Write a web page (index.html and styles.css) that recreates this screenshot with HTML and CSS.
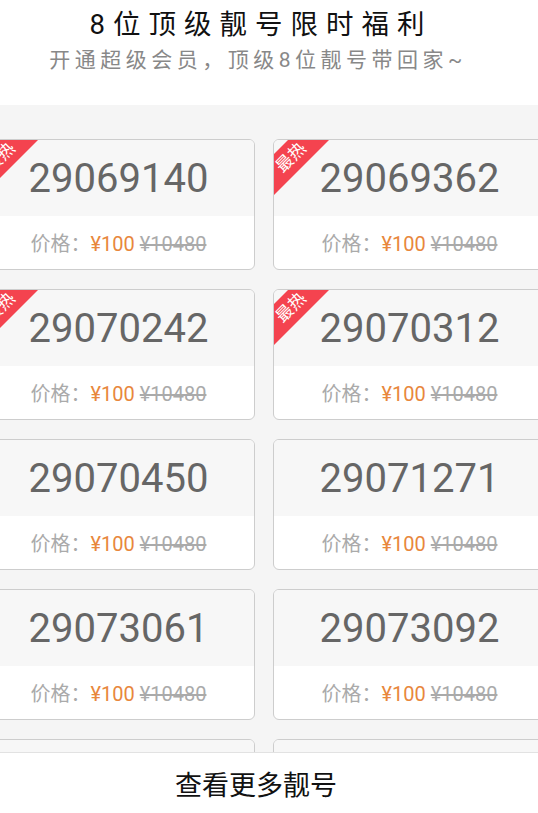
FILE: index.html
```html
<!DOCTYPE html>
<html lang="zh-CN">
<head>
<meta charset="utf-8">
<title>8位顶级靓号限时福利</title>
<link rel="stylesheet" href="styles.css">
</head>
<body>
<div class="page">
  <header class="header">
    <h1 class="title">8位顶级靓号限时福利</h1>
    <p class="subtitle">开通超级会员，顶级8位靓号带回家~</p>
  </header>
  <main class="list">
    <div class="grid">
      <div class="card"><div class="ribbon">最热</div><div class="num">29069140</div><div class="price"><span>价格：<span class="now">¥100</span> <span class="old">¥10480</span></span></div></div>
      <div class="card"><div class="ribbon">最热</div><div class="num">29069362</div><div class="price"><span>价格：<span class="now">¥100</span> <span class="old">¥10480</span></span></div></div>
      <div class="card"><div class="ribbon">最热</div><div class="num">29070242</div><div class="price"><span>价格：<span class="now">¥100</span> <span class="old">¥10480</span></span></div></div>
      <div class="card"><div class="ribbon">最热</div><div class="num">29070312</div><div class="price"><span>价格：<span class="now">¥100</span> <span class="old">¥10480</span></span></div></div>
      <div class="card"><div class="num">29070450</div><div class="price"><span>价格：<span class="now">¥100</span> <span class="old">¥10480</span></span></div></div>
      <div class="card"><div class="num">29071271</div><div class="price"><span>价格：<span class="now">¥100</span> <span class="old">¥10480</span></span></div></div>
      <div class="card"><div class="num">29073061</div><div class="price"><span>价格：<span class="now">¥100</span> <span class="old">¥10480</span></span></div></div>
      <div class="card"><div class="num">29073092</div><div class="price"><span>价格：<span class="now">¥100</span> <span class="old">¥10480</span></span></div></div>
      <div class="card"><div class="num"></div><div class="price"></div></div>
      <div class="card"><div class="num"></div><div class="price"></div></div>
    </div>
  </main>
  <footer class="footer">查看更多靓号</footer>
</div>
</body>
</html>
```

FILE: styles.css
```css
* { box-sizing: border-box; }
html, body {
  margin: 0;
  padding: 0;
  background: #ffffff;
}
body {
  font-family: Roboto, "Noto Sans CJK SC", "Noto Sans", sans-serif;
}
.page {
  width: 538px;
  height: 813px;
  display: flex;
  flex-direction: column;
  overflow: hidden;
}
.header {
  height: 105px;
  flex: none;
  padding-top: 7px;
  padding-right: 16px;
  text-align: center;
  background: #ffffff;
}
.title {
  margin: 0;
  font-size: 27.5px;
  line-height: 36px;
  font-weight: 400;
  letter-spacing: 8px;
  color: #111111;
}
.subtitle {
  margin: 2px 0 0;
  padding-right: 6px;
  font-size: 21px;
  line-height: 30px;
  letter-spacing: 4.5px;
  color: #888888;
}
.list {
  flex: 1;
  min-height: 0;
  overflow: hidden;
  background: #f5f5f5;
  padding-top: 34px;
}
.grid {
  margin-left: -18px;
  display: grid;
  grid-template-columns: 273px 273px;
  column-gap: 18px;
  row-gap: 19px;
}
.card {
  position: relative;
  height: 131px;
  border: 1px solid #cdcdcd;
  border-radius: 6px;
  overflow: hidden;
  background: #ffffff;
  display: flex;
  flex-direction: column;
}
.num {
  height: 76px;
  flex: none;
  background: #f7f7f7;
  display: flex;
  align-items: center;
  justify-content: center;
  font-size: 40px;
  color: #666666;
}
.price {
  flex: 1;
  display: flex;
  align-items: center;
  justify-content: center;
  font-size: 20px;
  color: #aaaaaa;
  white-space: nowrap;
}
.now { color: #e8873c; }
.old {
  color: #aaaaaa;
  text-decoration: line-through;
}
.ribbon {
  position: absolute;
  left: -28px;
  top: 2.5px;
  width: 90px;
  height: 29px;
  line-height: 29px;
  transform: rotate(-45deg);
  background: #f4434f;
  color: #ffffff;
  font-size: 17px;
  text-align: center;
}
.footer {
  height: 61px;
  flex: none;
  border-top: 1px solid #e2e2e2;
  background: #ffffff;
  display: flex;
  align-items: center;
  justify-content: center;
  padding-right: 26px;
  font-size: 27px;
  color: #111111;
}
```
